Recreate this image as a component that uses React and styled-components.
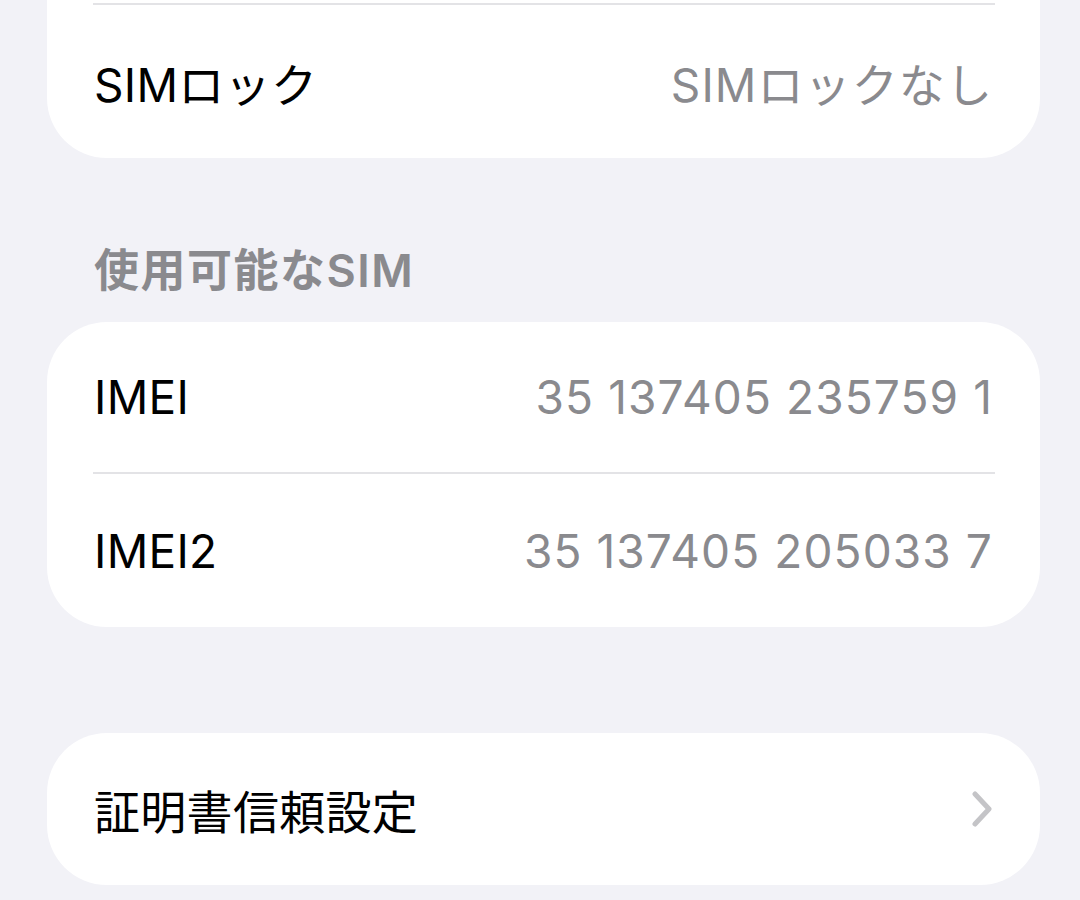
import React from "react";
import styled, { createGlobalStyle } from "styled-components";

const GlobalStyle = createGlobalStyle`
  html, body {
    margin: 0;
    padding: 0;
    background: #f2f2f7;
  }
  body {
    font-family: "Inter", "Noto Sans CJK JP", sans-serif;
    -webkit-font-smoothing: antialiased;
  }
`;

const Page = styled.div`
  width: 1080px;
  height: 900px;
  overflow: hidden;
  box-sizing: border-box;
  background: #f2f2f7;
  padding: 0 40px 0 47px;
  display: flex;
  flex-direction: column;
`;

const Card = styled.section`
  background: #ffffff;
  border-radius: ${(p) => (p.$cutTop ? "0 0 60px 60px" : "60px")};
  margin-top: ${(p) => p.$gap || 0}px;
  padding-top: ${(p) => (p.$cutTop ? 3 : 0)}px;
  display: flex;
  flex-direction: column;
`;

const Divider = styled.div`
  height: 2px;
  background: #e3e3e6;
  margin: 0 45px 0 46px;
`;

const Row = styled.div`
  height: ${(p) => p.$h || 152}px;
  display: flex;
  align-items: center;
  justify-content: space-between;
  padding: 0 47px 0 47px;
  box-sizing: border-box;
`;

const Label = styled.span`
  font-size: 46px;
  color: #000000;
  font-weight: 400;
  letter-spacing: 0.3px;
`;

const Value = styled.span`
  font-size: 46px;
  color: #8a8a8e;
  font-weight: 400;
  letter-spacing: 1.1px;
`;

const SectionHeader = styled.h2`
  margin: 86px 0 0 0;
  padding: 0 0 0 47px;
  height: 78px;
  display: flex;
  align-items: flex-start;
  font-size: 45px;
  line-height: 54px;
  font-weight: 600;
  letter-spacing: 1.5px;
  color: #8a8a8e;
`;

const Chevron = styled.svg`
  width: 22px;
  height: 36px;
  display: block;
`;

function ChevronRight() {
  return (
    <Chevron viewBox="0 0 22 36" fill="none">
      <path
        d="M4 3 L18 18 L4 33"
        stroke="#c4c4c7"
        strokeWidth="5"
        strokeLinecap="round"
        strokeLinejoin="round"
      />
    </Chevron>
  );
}

export default function App() {
  return (
    <>
      <GlobalStyle />
      <Page>
        <Card $cutTop>
          <Divider />
          <Row $h={153}>
            <Label>SIMロック</Label>
            <Value>SIMロックなし</Value>
          </Row>
        </Card>

        <SectionHeader>使用可能なSIM</SectionHeader>

        <Card>
          <Row $h={150}>
            <Label>IMEI</Label>
            <Value>35 137405 235759 1</Value>
          </Row>
          <Divider />
          <Row $h={153}>
            <Label>IMEI2</Label>
            <Value>35 137405 205033 7</Value>
          </Row>
        </Card>

        <Card $gap={106}>
          <Row $h={152}>
            <Label>証明書信頼設定</Label>
            <ChevronRight />
          </Row>
        </Card>
      </Page>
    </>
  );
}
